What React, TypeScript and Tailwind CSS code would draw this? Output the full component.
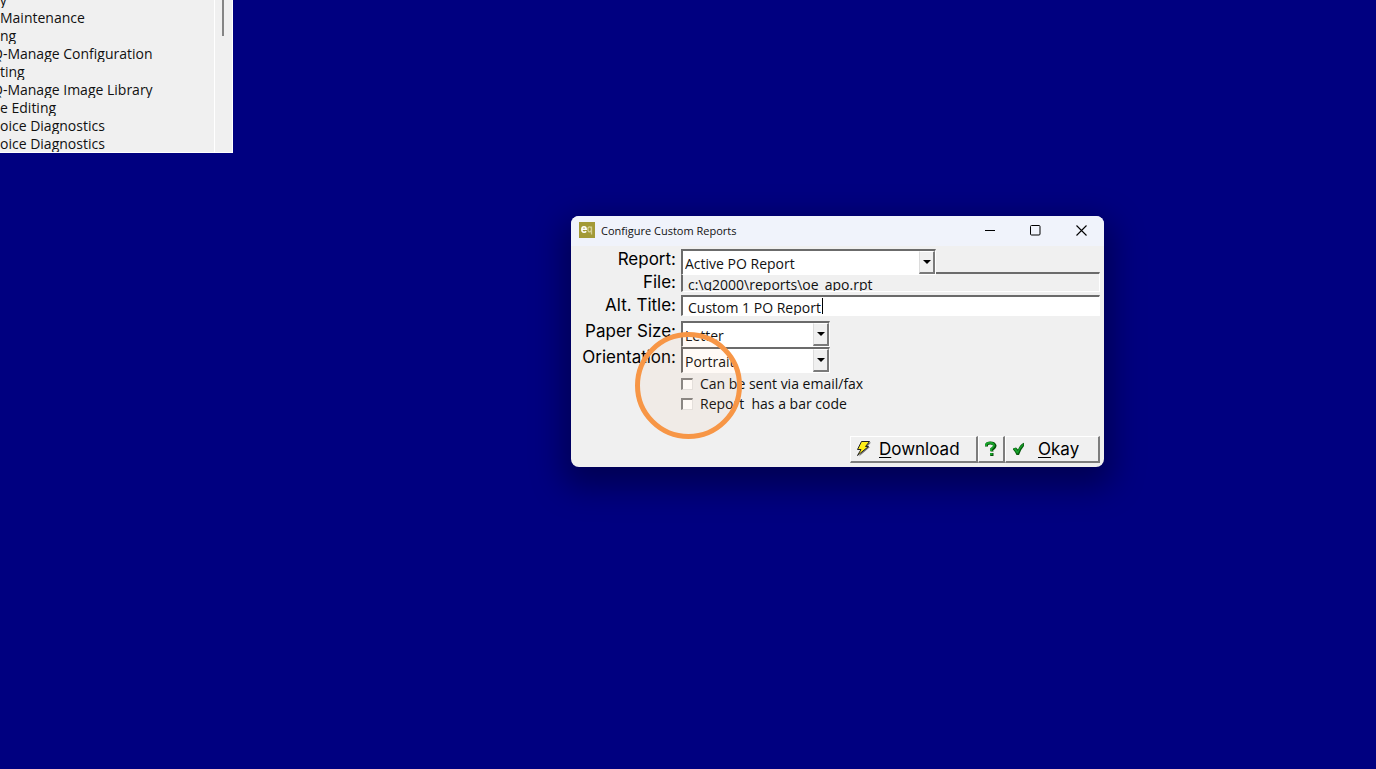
import { useState, type ReactNode } from 'react';
import { clsx } from 'clsx';

const menuRows = [
  { text: 'ey', clipped: true },
  { text: 'Maintenance' },
  { text: 'ng' },
  { text: 'Q-Manage Configuration', clipped: true },
  { text: 'ting' },
  { text: 'Q-Manage Image Library', clipped: true },
  { text: 'e Editing' },
  { text: 'oice Diagnostics' },
  { text: 'oice Diagnostics' },
];

const sunken = 'border-t-2 border-l-2 border-b border-r border-t-[#6b6b6b] border-l-[#6b6b6b] border-b-white border-r-white';

function MenuWindow() {
  return (
    <nav className="absolute -top-[10px] -left-2 flex w-[241px] border-r border-b border-white bg-[#f0f0f0] pl-2">
      <ul className="min-w-0 flex-1">
        {menuRows.map((row, i) => (
          <li
            key={i}
            className={clsx('h-[18px] overflow-hidden text-sm leading-5 whitespace-nowrap', row.clipped && '-ml-2')}
          >
            {row.text}
          </li>
        ))}
      </ul>
      <div className="flex w-[18px] justify-center border-l border-white pr-0.5">
        <div className="h-[46px] w-0.5 bg-[#858585]" />
      </div>
    </nav>
  );
}

function Label({ htmlFor, children }: { htmlFor: string; children: ReactNode }) {
  return (
    <label
      htmlFor={htmlFor}
      className="w-[105px] shrink-0 text-right font-['Inter',sans-serif] text-[17px] leading-5 whitespace-nowrap text-black"
    >
      {children}
    </label>
  );
}

function Combo({ id, options, className }: { id: string; options: string[]; className: string }) {
  return (
    <div className={clsx('relative z-10 flex h-[26px] bg-white', sunken, className)}>
      <select id={id} className="h-full w-full appearance-none bg-white pt-0.5 pl-0.5 text-sm leading-5 outline-none">
        {options.map((option) => (
          <option key={option}>{option}</option>
        ))}
      </select>
      <span className="pointer-events-none absolute inset-y-0 right-0 flex w-4 items-center justify-center border-t border-r-2 border-b-2 border-l border-t-white border-r-[#7a7a7a] border-b-[#7a7a7a] border-l-[#dcdcdc] bg-[#f0f0f0]">
        <svg width="8" height="4" viewBox="0 0 8 4" aria-hidden="true">
          <path d="M0 0h8L4 4z" fill="#000" />
        </svg>
      </span>
    </div>
  );
}

function Check({ label }: { label: string }) {
  return (
    <label className="flex h-5 items-center gap-[7px] text-sm leading-5 whitespace-pre">
      <input
        type="checkbox"
        className="size-3 appearance-none border-t-2 border-r border-b border-l-2 border-t-[#858585] border-r-[#e3e3e3] border-b-[#e3e3e3] border-l-[#858585] bg-white checked:bg-gray-500"
      />
      {label}
    </label>
  );
}

const buttonStyle =
  "flex h-[27px] items-center border-t border-l border-r-2 border-b-2 border-t-white border-l-white border-r-[#7d7d7d] border-b-[#7d7d7d] bg-[#f0f0f0] font-['Inter',sans-serif] text-[17px] leading-5 text-black";

export default function App() {
  const [title, setTitle] = useState('Custom 1 PO Report');

  return (
    <main className="relative min-h-screen overflow-hidden bg-[#000080] font-['Open_Sans',sans-serif] text-[#111]">
      <MenuWindow />

      <section
        aria-label="Configure Custom Reports"
        className="absolute top-[216px] left-[571px] w-[533px] rounded-lg bg-[#f0f0f0] shadow-[0_12px_32px_8px_rgba(0,0,0,0.35)]"
      >
        <header className="flex h-[30px] items-center rounded-t-lg bg-[#f0f3fb] pb-0.5 pl-2">
          <svg width="16" height="16" viewBox="0 0 16 16" aria-hidden="true">
            <rect width="16" height="16" fill="#a39a37" />
            <path d="M3 7.300h4.200Q7.200 4.700 5 4.700T2.800 7.400 5 10.200Q6.500 10.200 7.200 9.200" fill="none" stroke="#fff" strokeWidth="1.500" />
            <path d="M12.500 4.500v8M12.500 7.400Q12.500 4.900 10.600 4.900T8.900 7.400 10.600 9.900 12.500 7.400" fill="none" stroke="#d5cf91" strokeWidth="1.300" />
          </svg>
          <h1 className="ml-1.5 flex-1 pt-0.5 text-[11px]">Configure Custom Reports</h1>
          <button aria-label="Minimize" className="flex h-full w-[46px] items-center justify-center">
            <svg width="10" height="11" viewBox="0 0 10 11"><path d="M0 5.500h10" stroke="#000" /></svg>
          </button>
          <button aria-label="Maximize" className="flex h-full w-[45px] items-center justify-center">
            <svg width="11" height="11" viewBox="0 0 11 11"><rect x=".5" y=".5" width="9.500" height="9.500" rx="1" fill="none" stroke="#000" /></svg>
          </button>
          <button aria-label="Close" className="flex h-full w-[46px] items-center justify-center">
            <svg width="11" height="11" viewBox="0 0 11 11"><path d="M.5.5l10 10M10.500.5l-10 10" stroke="#000" strokeWidth="1.100" /></svg>
          </button>
        </header>

        <form className="flex flex-col pt-[3px] pr-1 pb-1" onSubmit={(e) => e.preventDefault()}>
          <div className="flex h-[23px] items-start gap-[5px]">
            <Label htmlFor="report">Report:</Label>
            <Combo id="report" options={['Active PO Report']} className="w-[255px]" />
          </div>
          <div className="flex gap-[5px]">
            <Label htmlFor="file">File:</Label>
            <input
              id="file"
              readOnly
              value="c:\q2000\reports\oe_apo.rpt"
              className={clsx('h-5 min-w-0 flex-1 bg-[#f0f0f0] pt-1 pl-[5px] text-sm leading-5 outline-none', sunken)}
            />
          </div>
          <div className="mt-[3px] flex gap-[5px]">
            <Label htmlFor="title">Alt. Title:</Label>
            <div className="relative flex min-w-0 flex-1">
              <input
                id="title"
                value={title}
                onChange={(e) => setTitle(e.target.value)}
                className={clsx('h-[21px] w-full bg-white pt-[3px] pl-[5px] text-sm leading-5 outline-none', sunken)}
              />
              <span className="absolute top-[3px] left-[141px] h-4 w-px bg-black" />
            </div>
          </div>
          <div className="mt-[5px] flex h-[26px] gap-[5px]">
            <Label htmlFor="paper">Paper Size:</Label>
            <Combo id="paper" options={['Letter', 'Legal']} className="w-[149px]" />
          </div>
          <div className="flex h-[26px] gap-[5px]">
            <Label htmlFor="orientation">Orientation:</Label>
            <Combo id="orientation" options={['Portrait', 'Landscape']} className="w-[149px]" />
          </div>
          <div className="flex flex-col items-start pt-px pl-[110px]">
            <Check label="Can be sent via email/fax" />
            <Check label="Report  has a bar code" />
          </div>
          <div className="mt-[22px] flex justify-end">
            <button type="button" className={clsx(buttonStyle, 'w-[128px] pl-[5px]')}>
              <svg width="15" height="16" viewBox="0 0 15 16" aria-hidden="true">
                <path d="M7 1.500h8L11 6h3L3 15.500 6.500 9H3z" fill="#777" />
                <path d="M5.500.5h8L9.500 5.500h3L1.500 14.500 5 8.500H1.500z" fill="#ffee16" stroke="#222" strokeWidth="1" />
              </svg>
              <span className="ml-2"><u className="underline-offset-2">D</u>ownload</span>
            </button>
            <button type="button" aria-label="Help" className={clsx(buttonStyle, 'w-[27px] justify-center')}>
              <svg width="14" height="16" viewBox="0 0 14 16" aria-hidden="true">
                <path d="M2.500 5.500V4Q3 2 6.500 2T11 4.500Q11 6.500 8 8.200V10.500M6.200 13.500h3.300" fill="none" stroke="#064f0a" strokeWidth="3" />
                <path d="M2 5V3.500Q3 1.800 6 1.800T10 4.300Q10 6 7.200 7.800V10M6 13h2.500" fill="none" stroke="#18a42c" strokeWidth="2" />
              </svg>
            </button>
            <button type="button" className={clsx(buttonStyle, 'w-[95px] pl-1.5')}>
              <svg width="14" height="14" viewBox="0 0 14 14" aria-hidden="true">
                <path d="M1 6.500L4 5.500l2 2Q8 2.500 12 .8V4Q8.500 8 7 13H4.500Q3 9.500 1 7.500z" fill="#075a0d" />
                <path d="M1.500 6.700l2-.7 2.200 3Q8 4 11.300 1.500V3.200Q8 6 6 11.500H5Q3.500 9 1.500 6.700z" fill="#16a32b" />
              </svg>
              <span className="ml-3"><u className="underline-offset-2">O</u>kay</span>
            </button>
          </div>
        </form>
      </section>

      <div className="pointer-events-none absolute top-[332px] left-[635px] z-20 size-[107px] rounded-full border-[5px] border-[#f79646] bg-[#f79646]/5" />
    </main>
  );
}
